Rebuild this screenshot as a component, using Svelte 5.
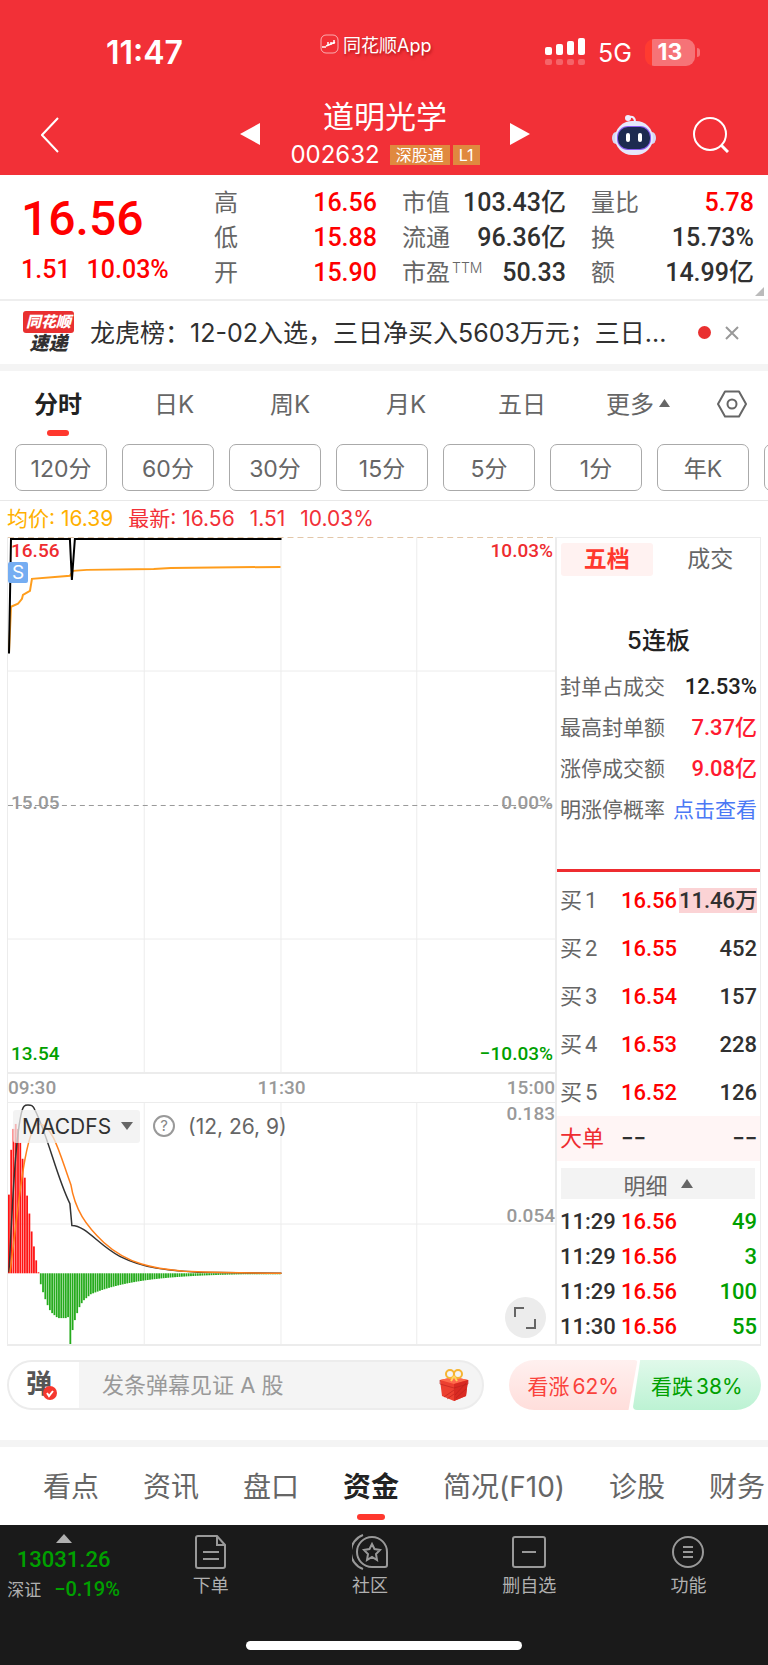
<script>
  const stats = [
    [['高', '16.56', true], ['低', '15.88', true], ['开', '15.90', true]],
    [['市值', '103.43亿'], ['流通', '96.36亿'], ['市盈', '50.33', false, 'TTM']],
    [['量比', '5.78', true], ['换', '15.73%'], ['额', '14.99亿']]
  ];
  const periods = ['分时', '日K', '周K', '月K', '五日', '更多'];
  const minutes = ['120分', '60分', '30分', '15分', '5分', '1分', '年K'];
  const facts = [
    ['封单占成交', '12.53%', 'dark'],
    ['最高封单额', '7.37亿', 'rise'],
    ['涨停成交额', '9.08亿', 'rise']
  ];
  const bids = [
    ['买1', '16.56', '11.46万'],
    ['买2', '16.55', '452'],
    ['买3', '16.54', '157'],
    ['买4', '16.53', '228'],
    ['买5', '16.52', '126']
  ];
  const ticks = [
    ['11:29', '16.56', '49'],
    ['11:29', '16.56', '3'],
    ['11:29', '16.56', '100'],
    ['11:30', '16.56', '55']
  ];
  const sections = ['看点', '资讯', '盘口', '资金', '简况(F10)', '诊股', '财务'];

  let period = $state('分时');
  let section = $state('资金');
  let bookTab = $state('五档');

  // histogram: positive, then negative, then an even decay until the noon break
  const macd = [
    79, 124, 145, 150, 145, 131, 115, 96, 78, 60, 42, 27, 13, 1,
    -11, -19, -26, -32, -37, -40, -42, -44, -45, -45, -45, -45, -44, -71,
    -57, -47, -40, -34, -30, -27, -25, -23
  ];
  for (let i = macd.length; i < 120; i++) {
    macd.push(-Math.max(1, 22 * Math.exp(-(i - 35) / 22)));
  }
</script>

<div class="page">
  <header>
    <div class="status">
      <span class="clock">11:47</span>
      <span class="app">
        <svg width="19" height="20" viewBox="0 0 19 20" fill="none" stroke="#fff">
          <rect x="1" y="1" width="17" height="18" rx="5" stroke-opacity=".6" />
          <path d="M2 13h2M5 12v2M8 8v4M11 8v3M14 6v4M6 12l5-2 4-2" stroke-width="1.500" />
        </svg>
        同花顺App
      </span>
      <span class="signal">
        <svg width="40" height="28" viewBox="0 0 40 28" fill="#fff">
          <rect x="0" y="9" width="7" height="8" rx="2" /><rect x="11" y="6" width="7" height="11" rx="2" />
          <rect x="22" y="3" width="7" height="14" rx="2" /><rect x="33" y="0" width="7" height="17" rx="2" />
          <g opacity=".25">
            <rect x="0" y="21" width="7" height="6" rx="2" /><rect x="11" y="21" width="7" height="6" rx="2" />
            <rect x="22" y="21" width="7" height="6" rx="2" /><rect x="33" y="21" width="7" height="6" rx="2" />
          </g>
        </svg>
        <span class="net">5G</span>
        <span class="battery">13</span>
      </span>
    </div>
    <nav class="title-bar">
      <button class="back" aria-label="返回">
        <svg width="18" height="36" viewBox="0 0 18 36" fill="none" stroke="#fff" stroke-width="2"><path d="M17 1L1 18l16 17" /></svg>
      </button>
      <div class="stock">
        <button class="step" aria-label="上一只"><svg width="20" height="22" viewBox="0 0 20 22" fill="#fff"><path d="M20 0v22L0 11z" /></svg></button>
        <div class="name">
          <h1>道明光学</h1>
          <div class="code">002632 <span class="tags"><span>深股通</span><span>L1</span></span></div>
        </div>
        <button class="step" aria-label="下一只"><svg width="20" height="22" viewBox="0 0 20 22" fill="#fff"><path d="M0 0v22l20-11z" /></svg></button>
      </div>
      <div class="tools">
        <button aria-label="助手">
          <svg width="44" height="42" viewBox="0 0 44 42">
            <path d="M17 3c4-1 6 1 6 5" fill="none" stroke="#eef" stroke-width="2" />
            <circle cx="16" cy="4" r="3" fill="#eef" />
            <ellipse cx="4" cy="24" rx="4" ry="6" fill="#d5d8f5" /><ellipse cx="40" cy="24" rx="4" ry="6" fill="#d5d8f5" />
            <rect x="3" y="7" width="38" height="34" rx="17" fill="#e6e8fb" />
            <rect x="5" y="12" width="34" height="24" rx="11" fill="#8a5cf0" />
            <rect x="6" y="13" width="32" height="22" rx="10" fill="#1d2a50" />
            <rect x="14" y="19" width="4" height="9" rx="2" fill="#fff" /><rect x="26" y="19" width="4" height="9" rx="2" fill="#fff" />
          </svg>
        </button>
        <button aria-label="搜索">
          <svg width="36" height="36" viewBox="0 0 36 36" fill="none" stroke="#fff" stroke-width="2"><circle cx="17" cy="17" r="16" /><path d="M28 28l7 7" stroke-width="3" /></svg>
        </button>
      </div>
    </nav>
  </header>

  <section class="quote">
    <div class="last">
      <strong>16.56</strong>
      <p><span>1.51</span><span>10.03%</span></p>
    </div>
    {#each stats as column}
      <dl>
        {#each column as [label, value, red, sup]}
          <div>
            <dt>{label}{#if sup}<sup>{sup}</sup>{/if}</dt>
            <dd class:red>{value}</dd>
          </div>
        {/each}
      </dl>
    {/each}
    <svg class="corner" width="9" height="9" viewBox="0 0 9 9"><path d="M9 0v9H0z" fill="#bbb" /></svg>
  </section>

  <section class="news">
    <div class="brand"><b>同花顺</b><i>速递</i></div>
    <a href="#news">龙虎榜：12-02入选，三日净买入5603万元；三日...</a>
    <span class="dot"></span>
    <button aria-label="关闭">
      <svg width="14" height="14" viewBox="0 0 14 14" stroke="#999" stroke-width="2"><path d="M1 1l12 12M13 1L1 13" /></svg>
    </button>
  </section>

  <nav class="periods">
    {#each periods as name}
      <button class:active={period === name} onclick={() => (period = name)}>
        {name}{#if name === '更多'}<svg width="11" height="8" viewBox="0 0 11 8"><path d="M5.500 0L11 8H0z" fill="#666" /></svg>{/if}
      </button>
    {/each}
    <button class="settings" aria-label="设置">
      <svg width="30" height="28" viewBox="0 0 30 28" fill="none" stroke="#666" stroke-width="2">
        <path d="M8 1.500h14L29 14l-7 12.500H8L1 14z" stroke-linejoin="round" /><circle cx="15" cy="14" r="4.500" />
      </svg>
    </button>
  </nav>
  <div class="minutes">
    {#each minutes as name}<button>{name}</button>{/each}
    <button aria-label="更多周期"></button>
  </div>

  <p class="legend">
    <span class="avg">均价: 16.39</span><span>最新: 16.56</span><span>1.51</span><span>10.03%</span>
  </p>

  <main>
    <div class="charts">
      <div class="price">
        <svg viewBox="0 0 548 537" preserveAspectRatio="none" fill="none">
          <path d="M136.500 0v537M273.500 0v537M409.500 0v537M0 134.500h548M0 403.500h548" stroke="#ececec" />
          <path d="M0 269.500h548" stroke="#999" stroke-dasharray="5 4" />
          <path d="M0 0.500h548" stroke="#e3c7a8" stroke-dasharray="6 4" />
          <path d="M1 116L3 70l7-3 4-5 1-4 7-4 2-12 26-2 12-1 3-5 14-1 67-1 17-1 110-1" stroke="#ff9d1c" stroke-width="2" />
          <path d="M1 117L3 2h59l2 41 3-41h207" stroke="#000" stroke-width="2" />
        </svg>
        <span class="lab top red">16.56</span>
        <span class="lab top right red">10.03%</span>
        <span class="mark">S</span>
        <span class="lab mid">15.05</span>
        <span class="lab mid right">0.00%</span>
        <span class="lab bottom green">13.54</span>
        <span class="lab bottom right green">−10.03%</span>
      </div>
      <div class="times"><span>09:30</span><span>11:30</span><span>15:00</span></div>
      <div class="macd">
        <svg viewBox="0 0 548 242" preserveAspectRatio="none" fill="none">
          <path d="M136.500 0v242M273.500 0v242M409.500 0v242M0 121.500h548" stroke="#ececec" />
          {#each macd as h, i}
            <rect x={i * 2.28} y={h > 0 ? 171 - h : 171} width="1.800" height={Math.abs(h)} fill={h > 0 ? '#ff1414' : '#25ab1c'} />
          {/each}
          <path d="M1 170C4 110 7 40 13 12 15 2 17 2 20 2s5 0 7 5C40 33 49 75 62 101l2 22c14 0 27 20 48 31 26 13 50 14 80 16l82 1" stroke="#333" stroke-width="1.500" />
          <path d="M2 170C10 110 17 21 31 21s22 34 32 61c4 25 15 41 33 58 24 22 50 26 80 29 30 1 60 2 98 2" stroke="#ff7f1a" stroke-width="1.500" />
        </svg>
        <div class="indicator">
          <label><select aria-label="指标"><option>MACDFS</option></select>
            <svg width="12" height="8" viewBox="0 0 12 8"><path d="M0 0h12L6 8z" fill="#666" /></svg></label>
          <button class="help" aria-label="说明">?</button>
          <span>(12, 26, 9)</span>
        </div>
        <span class="lab high">0.183</span>
        <span class="lab low">0.054</span>
        <button class="expand" aria-label="全屏">
          <svg width="22" height="22" viewBox="0 0 22 22" fill="none" stroke="#666" stroke-width="2"><path d="M1 10V1h9M21 12v9h-9" /></svg>
        </button>
      </div>
    </div>

    <aside>
      <div class="book-tabs">
        {#each ['五档', '成交'] as name}
          <button class:active={bookTab === name} onclick={() => (bookTab = name)}>{name}</button>
        {/each}
      </div>
      <h2>5连板</h2>
      <div class="facts">
        {#each facts as [label, value, tone]}
          <p><span>{label}</span><b class={tone}>{value}</b></p>
        {/each}
        <p><span>明涨停概率</span><a href="#limit">点击查看</a></p>
      </div>
      <table class="bids">
        <tbody>
          {#each bids as [label, price, volume], i}
            <tr><th>{label[0]}<span>{label[1]}</span></th><td class="px">{price}</td><td><span class:hot={i === 0}>{volume}</span></td></tr>
          {/each}
          <tr class="big"><th>大单</th><td>−−</td><td>−−</td></tr>
        </tbody>
      </table>
      <button class="detail">明细
        <svg width="12" height="9" viewBox="0 0 12 9"><path d="M6 0l6 9H0z" fill="#666" /></svg>
      </button>
      <table class="ticks">
        <tbody>
          {#each ticks as [time, price, volume]}
            <tr><td>{time}</td><td class="px">{price}</td><td>{volume}</td></tr>
          {/each}
        </tbody>
      </table>
    </aside>
  </main>

  <div class="social">
    <div class="comment">
      <button class="bullet" aria-label="弹幕开关">弹
        <svg width="14" height="14" viewBox="0 0 14 14"><circle cx="7" cy="7" r="7" fill="#f5382f" /><path d="M4 7l2 3 4-5" fill="none" stroke="#fff" stroke-width="2" /></svg>
      </button>
      <input type="text" placeholder="发条弹幕见证 A 股" aria-label="弹幕" />
      <svg class="gift" width="30" height="32" viewBox="0 0 30 32">
        <path d="M1 11l14-3 14 3-2 16-12 5-12-5z" fill="#ec4030" />
        <path d="M1 11l14-3 14 3-14 4z" fill="#ff6a4c" />
        <path d="M15 15v17l12-5 2-16z" fill="#d92a22" />
        <path d="M15 21L5 28M15 25l-7 5M27 14L16 26M27 20l-10 9M1 11v4l14 4 14-4v-4" fill="none" stroke="#b91f1b" stroke-opacity=".6" />
        <ellipse cx="11" cy="5" rx="4" ry="4" fill="none" stroke="#f6b431" stroke-width="2" />
        <ellipse cx="19" cy="5" rx="4" ry="4" fill="none" stroke="#f6b431" stroke-width="2" />
        <path d="M15 7l-3 5M15 7l3 5" stroke="#ffd45c" stroke-width="2" />
      </svg>
    </div>
    <div class="votes">
      <button class="up">看涨<span>62%</span></button>
      <button class="down">看跌<span>38%</span></button>
    </div>
  </div>

  <nav class="sections">
    {#each sections as name}
      <button class:active={section === name} onclick={() => (section = name)}>{name}</button>
    {/each}
  </nav>

  <footer>
    <div class="bar">
      <button class="index">
        <svg width="16" height="9" viewBox="0 0 16 9"><path d="M8 0l8 9H0z" fill="#b0b0b0" /></svg>
        <b>13031.26</b>
        <span>深证<em>−0.19%</em></span>
      </button>
      <button>
        <svg width="36" height="36" viewBox="0 0 36 36"><path d="M5 2h19l8 9v21q0 2-2 2H5q-2 0-2-2V4q0-2 2-2zM24 2v9h8M10 18h16M10 25h16" /></svg>
        下单
      </button>
      <button>
        <svg width="36" height="36" viewBox="0 0 36 36"><path d="M35 18v13q0 2-2 2H20A15 15 0 1 1 35 18zM11 1a18 18 0 0 0 0 34M20 10l2.500 5 5.500 1-4 4 1 6-5-3-5 3 1-6-4-4 5.500-1z" /></svg>
        社区
      </button>
      <button>
        <svg width="36" height="36" viewBox="0 0 36 36"><rect x="2" y="3" width="32" height="30" rx="2" /><path d="M11 18h14" /></svg>
        删自选
      </button>
      <button>
        <svg width="36" height="36" viewBox="0 0 36 36"><circle cx="18" cy="18" r="15" /><path d="M13 13h10M13 18h10M13 23h10" /></svg>
        功能
      </button>
    </div>
    <div class="home"></div>
  </footer>
</div>

<style>
:global(body) {
  margin: 0;
  background: #fff;
}
.page {
  font-family: Inter, "Noto Sans CJK SC", sans-serif;
  color: #303030;
  overflow: hidden;
}
.page * {
  box-sizing: border-box;
}
button {
  padding: 0;
  border: none;
  background: none;
  font: inherit;
  color: inherit;
  white-space: nowrap;
}
svg {
  display: block;
}
a {
  text-decoration: none;
}
p, h1, h2, dl, dd {
  margin: 0;
}
.red {
  color: #f00;
}
.green {
  color: #00a000;
}
header {
  background: #f23037;
  color: #fff;
}
.status {
  display: grid;
  grid-template-columns: 320fr 225fr 223fr;
  height: 88px;
  padding-top: 33px;
}
.clock {
  padding-left: 106px;
  font-size: 32px;
  font-weight: 600;
  line-height: 40px;
}
.app {
  display: flex;
  align-items: center;
  gap: 4px;
  height: 22px;
  font-size: 18px;
  text-shadow: 1px 2px 3px #7008;
}
.signal {
  display: flex;
  align-items: center;
  height: 38px;
}
.net {
  margin: 2px 13px 0;
  font-size: 25px;
}
.battery {
  position: relative;
  width: 50px;
  border-radius: 9px;
  background: linear-gradient(90deg, #ff3b30 14%, #f67377 14%);
  font-size: 23px;
  font-weight: 700;
  line-height: 27px;
  text-align: center;
}
.battery::after {
  content: "";
  position: absolute;
  right: -5px;
  top: 9px;
  width: 3px;
  height: 9px;
  border-radius: 0 3px 3px 0;
  background: #f67377;
}
.title-bar {
  display: grid;
  grid-template-columns: 1fr 290px 1fr;
  align-items: center;
  height: 87px;
  padding: 0 39px 0 41px;
}
.back {
  justify-self: start;
  margin-top: 7px;
}
.stock {
  display: flex;
  justify-content: space-between;
  align-items: center;
}
.step {
  margin-top: 4px;
}
.name {
  text-align: center;
}
h1 {
  padding-bottom: 2px;
  font-size: 31px;
  font-weight: 400;
  line-height: 44px;
}
.code {
  display: flex;
  align-items: center;
  gap: 10px;
  font-size: 24px;
  line-height: 28px;
}
.tags {
  display: flex;
  gap: 3px;
  font-size: 16px;
  line-height: 20px;
}
.tags span {
  padding: 0 6px;
  background: #e0893f;
}
.tools {
  display: flex;
  justify-content: flex-end;
  align-items: center;
  gap: 37px;
  margin-top: 7px;
}
.quote {
  position: relative;
  display: grid;
  grid-template-columns: 168fr 163fr 164fr 163fr;
  column-gap: 25px;
  height: 126px;
  padding: 10px 14px 0 21px;
  border-bottom: 2px solid #eee;
}
.last {
  color: #f00;
  font-family: Roboto, "Noto Sans CJK SC", sans-serif;
}
.last strong {
  display: block;
  font-size: 48px;
  font-weight: 500;
  line-height: 68px;
}
.last p {
  display: flex;
  gap: 16px;
  font-size: 25px;
  font-weight: 500;
  line-height: 34px;
}
dl div {
  display: flex;
  justify-content: space-between;
  height: 35px;
  line-height: 35px;
  white-space: nowrap;
}
dt {
  display: flex;
  color: #666;
  font-size: 24px;
}
sup {
  margin-left: 2px;
  font-size: 14px;
  font-weight: 300;
  line-height: 26px;
}
dd {
  font-family: Roboto, "Noto Sans CJK SC", sans-serif;
  font-size: 25px;
  font-weight: 500;
}
.corner {
  position: absolute;
  right: 4px;
  bottom: 3px;
}
.news {
  display: flex;
  align-items: center;
  height: 63px;
  padding: 0 29px 0 22px;
}
.brand {
  display: flex;
  flex-direction: column;
  align-items: center;
  width: 53px;
  margin-right: 15px;
  font-style: italic;
  font-weight: 900;
}
.brand b {
  width: 51px;
  border-radius: 3px;
  background: #e93030;
  color: #fff;
  font-size: 15px;
  line-height: 22px;
  text-align: center;
}
.brand i {
  font-size: 19px;
  line-height: 21px;
}
.news a {
  flex: 1;
  color: #303030;
  font-size: 25px;
  line-height: 36px;
  white-space: nowrap;
}
.dot {
  width: 13px;
  height: 13px;
  margin-right: 14px;
  border-radius: 50%;
  background: #e93030;
}
.periods {
  display: grid;
  grid-template-columns: repeat(6, 116fr) 72fr;
  height: 80px;
  border-top: 7px solid #f4f4f4;
}
.periods button, .sections button {
  position: relative;
  display: flex;
  justify-content: center;
  align-items: center;
  gap: 5px;
  color: #666;
}
.periods button {
  height: 66px;
  padding-bottom: 3px;
  font-size: 24px;
}
.periods .settings {
  padding: 0;
}
.periods .active, .sections .active {
  color: #222;
  font-weight: 700;
}
.periods .active::after, .sections .active::after {
  content: "";
  position: absolute;
  bottom: 1px;
  width: 22px;
  height: 6px;
  border-radius: 3px;
  background: #ff382e;
}
.minutes {
  display: flex;
  gap: 15px;
  height: 57px;
  padding-left: 15px;
  border-bottom: 1px solid #e8e8e8;
}
.minutes button {
  flex: none;
  width: 92px;
  height: 47px;
  padding-bottom: 2px;
  border: 1px solid #aaa;
  border-radius: 7px;
  color: #666;
  font-size: 23px;
}
.legend {
  display: flex;
  gap: 15px;
  padding: 0 7px;
  color: #f23037;
  font-size: 21px;
  line-height: 36px;
}
.avg {
  color: #ffb000;
}
main {
  display: grid;
  grid-template-columns: 1fr 205px;
  margin: 0 7px;
  border: solid #ececec;
  border-width: 0 1px 2px 1px;
}
.charts {
  display: flex;
  flex-direction: column;
}
.price {
  position: relative;
  flex: 1;
  border-bottom: 2px solid #ececec;
}
.price > svg, .macd > svg {
  position: absolute;
  width: 100%;
  height: 100%;
}
.lab {
  position: absolute;
  left: 3px;
  color: #999;
  font: 500 19px/26px Roboto, sans-serif;
}
.lab.right {
  right: 2px;
  left: auto;
}
.lab.red {
  color: #ee2c30;
}
.lab.green {
  color: #00a000;
}
.top {
  top: 1px;
}
.mid {
  top: 253px;
}
.bottom {
  bottom: 5px;
}
.lab.high, .lab.low {
  right: 0;
  left: auto;
}
.high {
  top: -2px;
}
.low {
  top: 100px;
}
.mark {
  position: absolute;
  top: 25px;
  left: 0;
  width: 20px;
  border-radius: 2px;
  background: #75adf2;
  color: #fff;
  font-size: 19px;
  line-height: 21px;
  text-align: center;
}
.times {
  display: flex;
  justify-content: space-between;
  color: #999;
  font: 500 19px/28px Roboto, sans-serif;
}
.macd {
  position: relative;
  height: 242px;
  border-top: 1px solid #ececec;
}
.indicator {
  position: relative;
  display: flex;
  align-items: center;
  height: 34px;
  margin: 6px 0 0 5px;
  color: #666;
  font-size: 21px;
}
.indicator label {
  display: flex;
  align-items: center;
  justify-content: space-between;
  width: 127px;
  height: 33px;
  padding: 0 7px 0 9px;
  border-radius: 3px;
  background: #eeeb;
}
select {
  appearance: none;
  width: 96px;
  padding: 0;
  border: none;
  background: none;
  color: #303030;
  font: inherit;
}
.help {
  width: 22px;
  height: 22px;
  margin: 0 13px;
  border: 2px solid #999;
  border-radius: 50%;
  color: #888;
  font-size: 15px;
  line-height: 18px;
}
.expand {
  position: absolute;
  right: 9px;
  bottom: 6px;
  width: 41px;
  height: 41px;
  padding: 9px;
  border-radius: 50%;
  background: #ececec;
}
aside {
  border: solid #ececec;
  border-width: 1px 0 0 2px;
}
.book-tabs {
  display: grid;
  grid-template-columns: 1fr 1fr;
  gap: 12px;
  padding: 5px 4px 0;
  color: #666;
  font-size: 23px;
  line-height: 33px;
}
.book-tabs .active {
  border-radius: 3px;
  background: #fff2f1;
  color: #ff382e;
  font-weight: 700;
}
h2 {
  padding-top: 45px;
  color: #222;
  font-size: 24px;
  font-weight: 500;
  line-height: 40px;
  text-align: center;
}
.facts {
  padding: 5px 3px 39px;
  border-bottom: 3px solid #ee2c30;
}
.facts p {
  display: flex;
  justify-content: space-between;
  color: #666;
  font-size: 21px;
  line-height: 41px;
}
.facts b {
  font-family: Roboto, "Noto Sans CJK SC", sans-serif;
  font-weight: 500;
  font-size: 22px;
}
.facts .dark {
  color: #222;
}
.facts .rise {
  color: #ff1a30;
}
.facts a {
  color: #4b78f5;
}
table {
  width: 100%;
  border-collapse: collapse;
  table-layout: fixed;
  font-family: Roboto, "Noto Sans CJK SC", sans-serif;
  font-size: 22px;
  font-weight: 500;
  line-height: 25px;
}
.bids {
  margin-top: 4px;
}
tr {
  height: 48px;
}
th {
  width: 64px;
  padding: 0 0 0 3px;
  color: #666;
  font-weight: 400;
  text-align: left;
}
th span {
  margin-left: 3px;
}
td {
  padding: 0 3px 0 0;
  text-align: right;
  white-space: nowrap;
}
td:nth-child(2) {
  width: 58px;
  text-align: left;
}
.px {
  color: #f00;
}
.hot {
  display: inline-block;
  background: #fbd3d5;
}
.big {
  height: 45px;
  background: #fff5f5;
}
.big th {
  color: #ee2c30;
}
.detail {
  display: flex;
  justify-content: center;
  align-items: center;
  gap: 13px;
  width: calc(100% - 9px);
  height: 31px;
  margin: 7px 5px 5px 4px;
  background: #f3f3f3;
  color: #666;
  font-size: 22px;
}
.ticks tr {
  height: 35px;
}
.ticks td:first-child {
  width: 64px;
  padding-left: 3px;
  text-align: left;
}
.ticks td:last-child {
  color: #00a000;
}
.social {
  display: flex;
  gap: 25px;
  padding: 14px 7px 30px;
}
.comment {
  display: flex;
  flex: 1;
  align-items: center;
  height: 50px;
  overflow: hidden;
  padding-right: 13px;
  border: 2px solid #ececec;
  border-radius: 25px;
  background: #f4f4f4;
}
.bullet {
  display: flex;
  align-items: flex-end;
  height: 46px;
  width: 70px;
  padding: 0 0 8px 17px;
  background: #fff;
  color: #555;
  font-size: 26px;
  font-weight: 700;
  line-height: 32px;
}
.bullet svg {
  flex: none;
  margin-left: -9px;
}
input {
  flex: 1;
  min-width: 0;
  padding: 0 0 0 23px;
  border: none;
  background: none;
  font: inherit;
  font-size: 22px;
}
input::placeholder {
  color: #999;
}
.votes {
  display: flex;
  width: 252px;
  font-size: 21px;
}
.votes button {
  width: 129px;
  height: 50px;
}
.votes span {
  margin-left: 3px;
}
.up {
  clip-path: polygon(0 0, 100% 0, 93% 100%, 0 100%);
  border-radius: 25px 4px 4px 25px;
  background: linear-gradient(#fff0ef, #ffdedb);
  color: #fa423c;
}
.votes .down {
  margin-left: -5px;
  clip-path: polygon(6% 0, 100% 0, 100% 100%, 0 100%);
  border-radius: 4px 25px 25px 4px;
  background: linear-gradient(#e0f9ea, #bcf2d3);
  color: #00a000;
}
.sections {
  display: flex;
  gap: 44px;
  height: 85px;
  padding-left: 43px;
  border-top: 7px solid #f4f4f4;
}
.sections button {
  flex: none;
  padding-bottom: 2px;
  font-size: 28px;
}
.sections .active::after {
  bottom: 5px;
  width: 28px;
}
footer {
  padding-bottom: 15px;
  background: #1a1a1a;
}
.bar {
  display: grid;
  grid-template-columns: 131fr repeat(4, 159fr);
  height: 116px;
}
.bar button {
  display: flex;
  flex-direction: column;
  align-items: center;
  padding-top: 9px;
  color: #b0b0b0;
  font-size: 18px;
  line-height: 32px;
}
.bar button:not(.index) svg {
  fill: none;
  stroke: #999;
  stroke-width: 2;
}
.bar .index {
  padding-right: 4px;
}
.index b, .index em {
  color: #00a000;
  font: 500 22px/34px Roboto, sans-serif;
}
.index span {
  font-size: 17px;
  line-height: 24px;
}
.index em {
  margin-left: 13px;
  font-size: 20px;
  line-height: 24px;
}
.home {
  width: 36%;
  height: 9px;
  margin: 0 auto;
  border-radius: 5px;
  background: #fff;
}
</style>
